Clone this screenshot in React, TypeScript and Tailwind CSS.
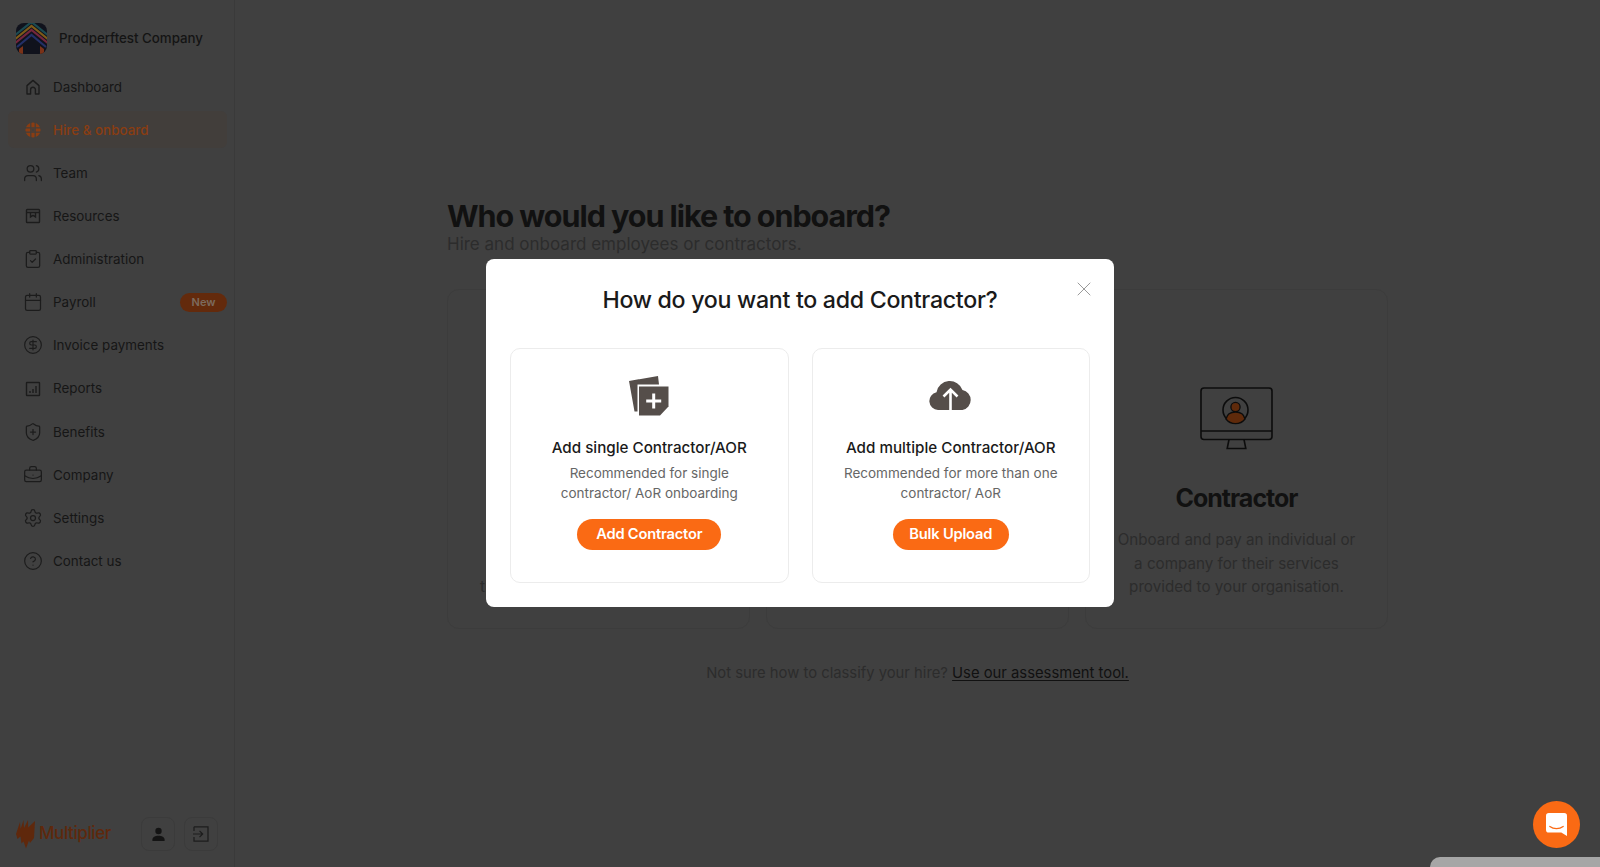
import React from "react";
import {
  BriefcaseBusiness,
  Calendar,
  CircleDollarSign,
  CircleHelp,
  ClipboardCheck,
  Settings,
  ShieldPlus,
  Users,
  X,
} from "lucide-react";

const font = { fontFamily: "Inter, 'Liberation Sans', sans-serif" };

const HomeIcon = () => (
  <svg viewBox="0 0 20 20" className="w-5 h-5" fill="none" stroke="currentColor" strokeWidth="1.4">
    <path d="M4 17V8.600L10 3.400l6 5.200V17h-3.600v-4.400a2.400 2.400 0 0 0-4.800 0V17z" strokeLinejoin="round" />
  </svg>
);

const GlobeIcon = () => (
  <svg viewBox="0 0 20 20" className="w-5 h-5">
    <circle cx="10" cy="10" r="7.600" fill="currentColor" />
    <path d="M2 7.800h16M2 12.200h16M7.800 2v16M12.200 2v16" stroke="#423e3b" strokeWidth="1.200" />
    <rect x="8.400" y="8.400" width="3.200" height="3.200" fill="#423e3b" />
  </svg>
);

const ResourcesIcon = () => (
  <svg viewBox="0 0 20 20" className="w-5 h-5" fill="none" stroke="currentColor" strokeWidth="1.4">
    <rect x="3.500" y="3.500" width="13" height="13" rx="0.800" />
    <path d="M3.500 6.500h13M7.500 6.500v4.400l2.500-1.600 2.500 1.600V6.500" />
  </svg>
);

const ReportsIcon = () => (
  <svg viewBox="0 0 20 20" className="w-5 h-5" fill="none" stroke="currentColor" strokeWidth="1.4">
    <rect x="3.500" y="3.500" width="13" height="13" rx="0.500" />
    <path d="M7 14v-2M10 14v-4M13 14V7" />
  </svg>
);

const CompanyLogo = () => (
  <svg viewBox="0 0 31 31" className="w-[31px] h-[31px] rounded-lg shrink-0 bg-[#10121c]">
    <path d="M-2 13 15.500 -1 33 13" fill="none" stroke="#1b4a50" strokeWidth="2.200" />
    <path d="M-2 17 15.500 3 33 17" fill="none" stroke="#7d5a18" strokeWidth="2.200" />
    <path d="M-2 21 15.500 7 33 21" fill="none" stroke="#74263c" strokeWidth="2.200" />
    <path d="M1 24 15.500 12 30 24" fill="none" stroke="#232f66" strokeWidth="2.200" />
    <path d="M3 31v-5l4-3v8zM24 31v-8l4 3v5z" fill="#7a3218" />
  </svg>
);

const navItems = [
  { label: "Dashboard", icon: <HomeIcon /> },
  { label: "Hire & onboard", icon: <GlobeIcon />, active: true },
  { label: "Team", icon: <Users className="w-5 h-5" strokeWidth={1.5} /> },
  { label: "Resources", icon: <ResourcesIcon /> },
  { label: "Administration", icon: <ClipboardCheck className="w-5 h-5" strokeWidth={1.5} /> },
  { label: "Payroll", icon: <Calendar className="w-5 h-5" strokeWidth={1.5} />, badge: "New" },
  { label: "Invoice payments", icon: <CircleDollarSign className="w-5 h-5" strokeWidth={1.4} /> },
  { label: "Reports", icon: <ReportsIcon /> },
  { label: "Benefits", icon: <ShieldPlus className="w-5 h-5" strokeWidth={1.5} /> },
  { label: "Company", icon: <BriefcaseBusiness className="w-5 h-5" strokeWidth={1.5} /> },
  { label: "Settings", icon: <Settings className="w-5 h-5" strokeWidth={1.5} /> },
  { label: "Contact us", icon: <CircleHelp className="w-5 h-5" strokeWidth={1.4} /> },
];

const Sidebar = () => (
  <aside className="w-[235px] shrink-0 h-full flex flex-col border-r border-[#3a3a3a] px-2 pt-[22px] pb-4">
    <div className="flex items-center gap-3 pl-2 h-[33px]">
      <CompanyLogo />
      <span className="text-[13.3px] font-medium text-[#141414]">Prodperftest Company</span>
    </div>
    <nav className="flex flex-col gap-[6.1px] mt-[13.4px]">
      {navItems.map((item) => (
        <div
          key={item.label}
          className={`h-[37px] w-[219px] flex items-center gap-[10px] pl-[15px] rounded-md text-[13.4px] ${
            item.active ? "bg-[#423e3b] text-[#8a3d12] font-medium" : "text-[#161616]"
          }`}
        >
          <span className={item.active ? "text-[#8a3d12]" : "text-[#1c1c1c]"}>{item.icon}</span>
          <span>{item.label}</span>
          {item.badge && (
            <span className="ml-auto w-[47px] h-[19px] rounded-full bg-[#632a0c] text-[#7c6a5e] text-[11px] font-semibold flex items-center justify-center">
              {item.badge}
            </span>
          )}
        </div>
      ))}
    </nav>
    <div className="mt-auto flex items-center pl-2">
      <div className="flex items-center w-[125px]">
        <svg viewBox="0 0 20 29" className="w-[20px] h-[29px] shrink-0" fill="#5f280c">
          <path d="M0 14 4 2l.6 7L7.500 0 8 8l4-8 .2 7.500L19 1l-1 17-4 5-1-2.500-3 8-2.500-7-2 2-1-7-3 2.500z" />
        </svg>
        <span className="text-[17px] font-medium text-[#5f280c] ml-[3px] tracking-[-0.4px]">Multiplier</span>
      </div>
      <button className="w-[34px] h-[34px] rounded-lg border border-[#3b3b3b] flex items-center justify-center">
        <svg viewBox="0 0 16 16" className="w-[15px] h-[15px]" fill="#141414">
          <circle cx="8" cy="4.200" r="3.400" />
          <path d="M1.500 15v-1.600C1.500 11 4.500 9.400 8 9.400s6.500 1.600 6.500 4V15z" />
        </svg>
      </button>
      <button className="w-[34px] h-[34px] ml-[9px] rounded-lg border border-[#3b3b3b] flex items-center justify-center text-[#1c1c1c]">
        <svg viewBox="0 0 16 16" className="w-4 h-4" fill="none" stroke="currentColor" strokeWidth="1.200">
          <path d="M1 .8h14v14.400H1V11M1 5V.8M0 8h9.500M6.500 4.800 9.700 8l-3.200 3.200" />
        </svg>
      </button>
    </div>
  </aside>
);

const MonitorIcon = () => (
  <svg viewBox="0 0 73 63" className="w-[73px] h-[63px]" fill="none" stroke="#0c0c0c" strokeWidth="1.600">
    <rect x="1" y="1" width="71" height="51.500" rx="3" />
    <path d="M1 44h71M29 52.500l-1.800 9h18.600l-1.800-9" />
    <circle cx="35.500" cy="23" r="12.500" />
    <circle cx="35.500" cy="20" r="4.600" fill="#5f2a0b" strokeWidth="1.300" />
    <path d="M26 32c1-4.800 5-7 9.500-7s8.500 2.200 9.500 7a12 12 0 0 1-19 0z" fill="#5f2a0b" strokeWidth="1.300" />
  </svg>
);

const Main = () => (
  <main className="flex-1 pl-[212px] pt-[198px]">
    <h1 className="text-[30.5px] leading-[36px] font-bold tracking-[-1.05px] text-[#111111]">
      Who would you like to onboard?
    </h1>
    <p className="text-[17px] leading-[21px] text-[#2c2c2c]">Hire and onboard employees or contractors.</p>
    <div className="flex gap-[16px] mt-[34px]">
      <div className="w-[303px] h-[340px] rounded-xl border border-[#3c3c3c] flex flex-col items-center pt-[285px]">
        <p className="text-[15.4px] leading-[23px] text-[#2c2c2c]">through our Employer of Record.</p>
      </div>
      <div className="w-[303px] h-[340px] rounded-xl border border-[#3c3c3c]" />
      <div className="w-[303px] h-[340px] rounded-xl border border-[#3c3c3c] flex flex-col items-center pt-[97px]">
        <MonitorIcon />
        <h2 className="mt-[32px] text-[25px] leading-[32px] font-bold tracking-[-1px] text-[#111111]">Contractor</h2>
        <p className="mt-[14px] text-[15.2px] leading-[23.500px] text-[#2c2c2c] text-center">
          Onboard and pay an individual or
          <br />a company for their services
          <br />provided to your organisation.
        </p>
      </div>
    </div>
    <p className="w-[941px] mt-[34px] text-center text-[14.8px] leading-[20px] text-[#2c2c2c]">
      Not sure how to classify your hire?{" "}
      <span className="text-[#111111] underline underline-offset-2">Use our assessment tool.</span>
    </p>
  </main>
);

const OptionCard = ({
  icon,
  title,
  lines,
  cta,
  ctaWidth,
}: {
  icon: React.ReactNode;
  title: string;
  lines: string[];
  cta: string;
  ctaWidth: string;
}) => (
  <div className="w-[278.5px] h-[235px] rounded-[10px] border border-[#ececec] flex flex-col items-center">
    <div className="h-[40px] mt-[27px] flex items-center justify-center">{icon}</div>
    <h3 className="mt-[22px] text-[15.2px] leading-[20px] font-medium text-[#1a1a1a]">{title}</h3>
    <p className="mt-[6px] text-[13.5px] leading-[19.500px] text-[#666666] text-center">
      {lines[0]}
      <br />
      {lines[1]}
    </p>
    <button className={`mt-[15.5px] h-[31px] rounded-full bg-[#fa6a14] text-white text-[14.7px] font-semibold tracking-[-0.2px] ${ctaWidth}`}>
      {cta}
    </button>
  </div>
);

const Modal = () => (
  <div className="fixed inset-0 flex items-center justify-center">
    <div className="relative w-[628px] h-[348px] mb-[1px] bg-white rounded-lg px-6 pt-[26px]">
      <button className="absolute right-[18px] top-[18px] text-[#9a9a9a]">
        <X className="w-6 h-6" strokeWidth={1} />
      </button>
      <h2 className="text-center text-[23.2px] leading-[30px] font-medium tracking-[-0.3px] text-[#1a1a1a]">
        How do you want to add Contractor?
      </h2>
      <div className="flex justify-between mt-[33px]">
        <OptionCard
          icon={
            <svg viewBox="0 0 40 40" className="w-10 h-10">
              <path d="M0 5 29 0l1 8.500H8.500V35.500H5.500z" fill="#554e4a" />
              <path d="M10 10.500h29.500v20L31 39.500H10z" fill="#554e4a" />
              <path d="M24.700 17.500v15M17.200 25h15" stroke="#fff" strokeWidth="3" />
            </svg>
          }
          title="Add single Contractor/AOR"
          lines={["Recommended for single", "contractor/ AoR onboarding"]}
          cta="Add Contractor"
          ctaWidth="w-[144px]"
        />
        <OptionCard
          icon={
            <svg viewBox="0 0 43 32" className="w-[43px] h-[32px] mb-[4px]">
              <path d="M9 32a9 9 0 0 1-1.500-17.800A13.500 13.500 0 0 1 33.500 12 10.200 10.200 0 0 1 33.500 32z" fill="#554e4a" />
              <path d="M21.500 32V12M14.500 18.500l7-7 7 7" stroke="#fff" strokeWidth="2.600" fill="none" />
            </svg>
          }
          title="Add multiple Contractor/AOR"
          lines={["Recommended for more than one", "contractor/ AoR"]}
          cta="Bulk Upload"
          ctaWidth="w-[116px]"
        />
      </div>
    </div>
  </div>
);

export default function App() {
  return (
    <div className="relative flex w-full h-[867px] overflow-hidden bg-[#404040]" style={font}>
      <Sidebar />
      <Main />
      <Modal />
      <div className="absolute right-0 bottom-0 w-[170px] h-[10px] bg-[#a6a6a6] rounded-tl-[14px]" />
      <div className="absolute right-[20px] bottom-[19px] w-[47px] h-[47px] rounded-full bg-[#fa6a14] flex items-center justify-center">
        <svg viewBox="0 0 22 24" className="w-[21px] h-[23px]">
          <path d="M3 0h16a3 3 0 0 1 3 3v21l-6-3.500H3a3 3 0 0 1-3-3V3a3 3 0 0 1 3-3z" fill="#fff" />
          <path d="M4 14c4 3 10 3 14 0" fill="none" stroke="#fa6a14" strokeWidth="1.300" strokeLinecap="round" />
        </svg>
      </div>
    </div>
  );
}
